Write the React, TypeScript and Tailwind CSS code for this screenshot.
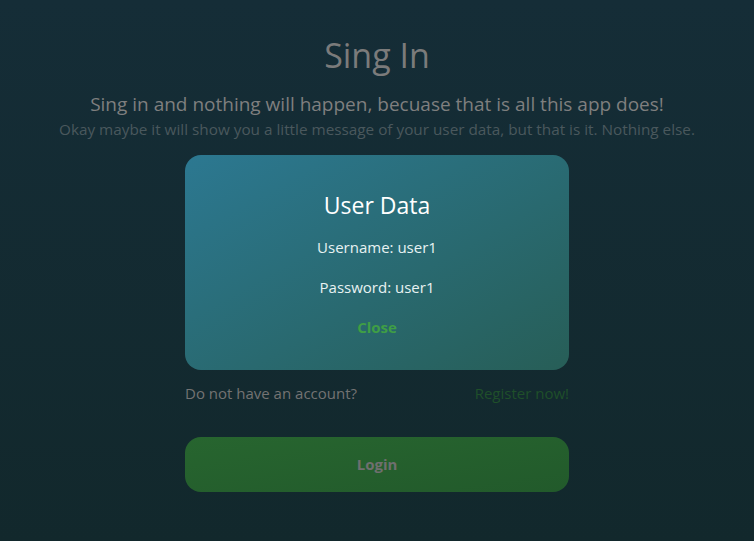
export default function App() {
  return (
    <div
      className="min-h-[541px] w-full bg-gradient-to-b from-[#152d37] to-[#12282c] flex flex-col items-center pt-[34px]"
      style={{ fontFamily: '"Open Sans", "Noto Sans", sans-serif' }}
    >
      <h1 className="text-[34px] leading-[42px] text-[#7b7b7b]">Sing In</h1>
      <p className="mt-[16px] text-[19px] leading-[24px] text-[#7f7f7f]">
        Sing in and nothing will happen, becuase that is all this app does!
      </p>
      <p className="mt-[3px] text-[15.3px] leading-[20px] text-[#4a585d]">
        Okay maybe it will show you a little message of your user data, but that is it. Nothing else.
      </p>

      <div className="mt-[16px] w-[384px]">
        <div className="h-[215px] rounded-[16px] bg-gradient-to-br from-[#2c7891] to-[#275e57] flex flex-col items-center pt-[34px]">
          <h2 className="text-[23px] leading-[32px] text-white">User Data</h2>
          <p className="mt-[16px] text-[15px] leading-[20px] text-[#e8f2f2]">Username: user1</p>
          <p className="mt-[20px] text-[15px] leading-[20px] text-[#e8f2f2]">Password: user1</p>
          <button className="mt-[20px] text-[15px] leading-[20px] font-bold text-[#3f9e45]">Close</button>
        </div>

        <div className="mt-[13px] flex justify-between text-[15px] leading-[20px]">
          <span className="text-[#737373]">Do not have an account?</span>
          <span className="text-[#1f4f2a]">Register now!</span>
        </div>

        <button className="mt-[34px] h-[55px] w-full rounded-[16px] bg-gradient-to-br from-[#27652f] to-[#225a2b] text-[15px] font-bold text-[#6f6f6f]">
          Login
        </button>
      </div>
    </div>
  );
}
